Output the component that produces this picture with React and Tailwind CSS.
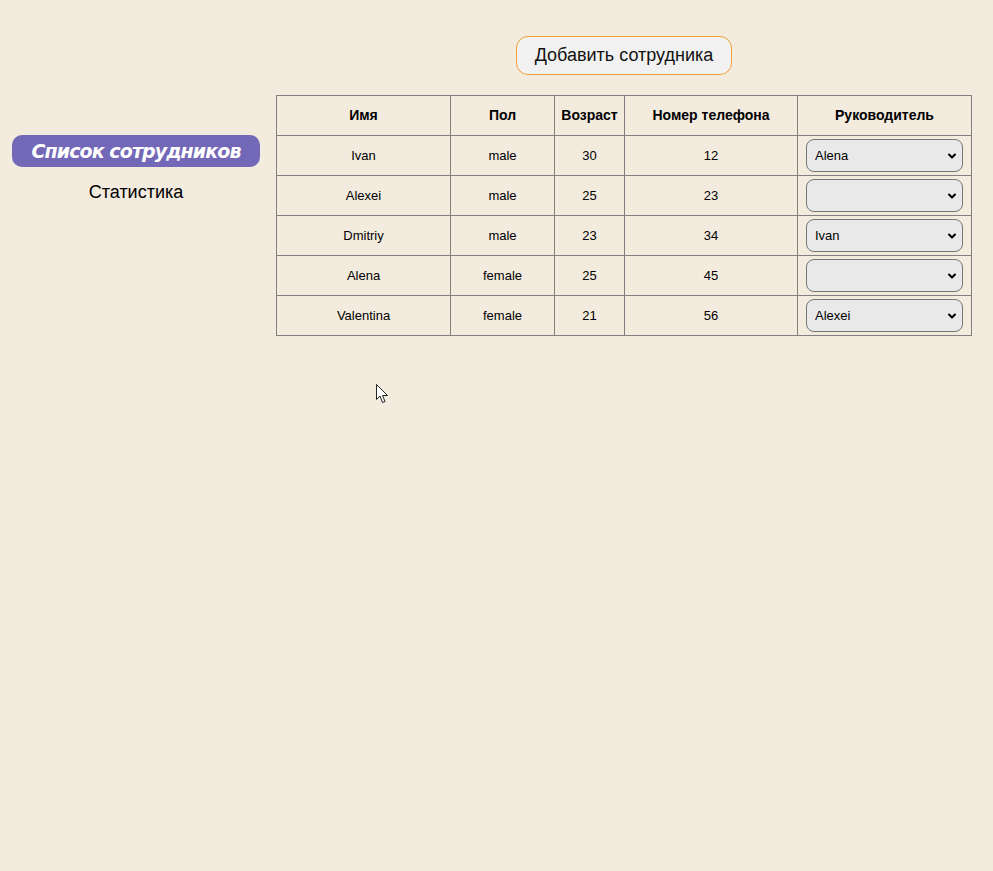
import { ChevronDown } from 'lucide-react';

const employees = [
  { name: 'Ivan', gender: 'male', age: 30, phone: 12, boss: 'Alena' },
  { name: 'Alexei', gender: 'male', age: 25, phone: 23, boss: '' },
  { name: 'Dmitriy', gender: 'male', age: 23, phone: 34, boss: 'Ivan' },
  { name: 'Alena', gender: 'female', age: 25, phone: 45, boss: '' },
  { name: 'Valentina', gender: 'female', age: 21, phone: 56, boss: 'Alexei' },
];

const BossSelect = ({ value }) => (
  <div className="relative mx-auto w-[157px]">
    <select
      defaultValue={value}
      className="appearance-none w-full h-[33px] rounded-lg border border-[#767676] bg-[#e9e9e9] pl-2 pr-6 text-[13px] text-black outline-none"
    >
      <option value=""></option>
      {employees.map(e => (
        <option key={e.name} value={e.name}>{e.name}</option>
      ))}
    </select>
    <ChevronDown className="pointer-events-none absolute right-[5px] top-[11px] w-[12px] h-[12px] text-black" strokeWidth={4} />
  </div>
);

const App = () => {
  return (
    <div className="relative min-h-[871px] bg-[#f2ebde] text-black" style={{ fontFamily: '"Liberation Sans", Arial, sans-serif' }}>
      <div className="flex">
        <aside className="w-[276px] shrink-0 pt-[135px] pl-3 pr-4 flex flex-col items-center">
          <div
            className="w-full h-8 rounded-[10px] bg-[#7368b8] flex items-center justify-center text-white text-[19px] font-bold italic"
            style={{ fontFamily: '"DejaVu Sans", Verdana, sans-serif', letterSpacing: '-0.9px' }}
          >
            Список сотрудников
          </div>
          <div className="mt-[12px] text-[18px]">
            Статистика
          </div>
        </aside>

        <main className="flex-1 pr-[21px] pt-9">
          <div className="flex justify-center">
            <button className="h-[39px] w-[216px] rounded-xl border border-[#f0a030] bg-[#f1f1f1] text-[18px] text-[#111]">
              Добавить сотрудника
            </button>
          </div>

          <table className="mt-5 w-[696px] table-fixed border-collapse text-[13px]">
            <colgroup>
              <col className="w-[174px]" />
              <col className="w-[104px]" />
              <col className="w-[70px]" />
              <col className="w-[173px]" />
              <col className="w-[174px]" />
            </colgroup>
            <thead>
              <tr className="h-10">
                {['Имя', 'Пол', 'Возраст', 'Номер телефона', 'Руководитель'].map(h => (
                  <th key={h} className="border border-[#808080] font-bold text-center text-[14px]">{h}</th>
                ))}
              </tr>
            </thead>
            <tbody>
              {employees.map(e => (
                <tr key={e.name} className="h-10">
                  <td className="border border-[#808080] text-center">{e.name}</td>
                  <td className="border border-[#808080] text-center">{e.gender}</td>
                  <td className="border border-[#808080] text-center">{e.age}</td>
                  <td className="border border-[#808080] text-center">{e.phone}</td>
                  <td className="border border-[#808080] text-center">
                    <BossSelect value={e.boss} />
                  </td>
                </tr>
              ))}
            </tbody>
          </table>
        </main>
      </div>

      {/* mouse pointer left in the screenshot */}
      <svg className="absolute left-[376px] top-[384px]" width="13" height="20" viewBox="0 0 13 20">
        <path d="M0.5 0.5 L0.5 15.5 L4 12 L6.5 18.5 L9 17.5 L6.5 11.5 L11.5 11.5 Z" fill="white" stroke="#222" strokeWidth="1" strokeLinejoin="round" />
      </svg>
    </div>
  );
};

export default App;
